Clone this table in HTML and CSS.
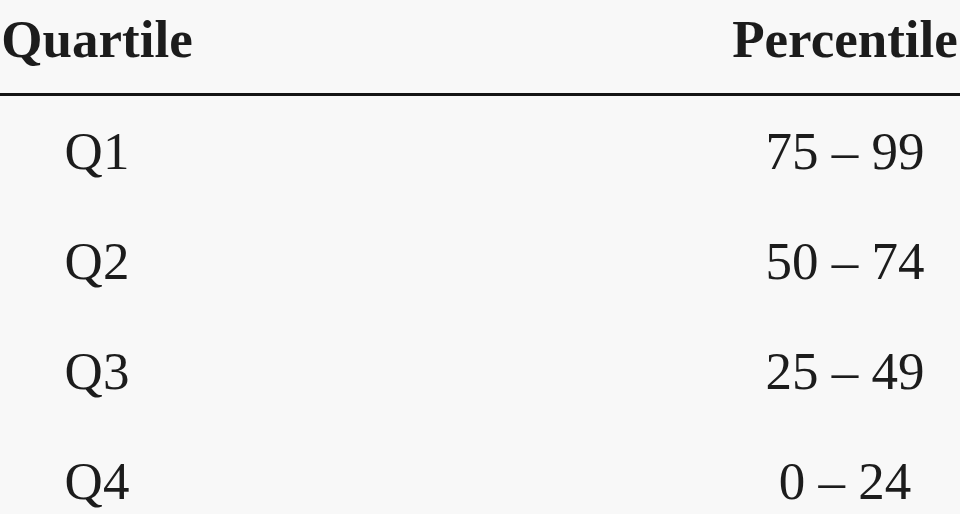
FILE: index.html
```html
<!DOCTYPE html>
<html lang="en">
<head>
<meta charset="utf-8">
<title>Quartile table</title>
<link rel="stylesheet" href="styles.css">
</head>
<body>
<div class="table">
  <div class="row head">
    <div class="cell left">Quartile</div>
    <div class="cell right">Percentile</div>
  </div>
  <div class="row">
    <div class="cell left">Q1</div>
    <div class="cell right">75 – 99</div>
  </div>
  <div class="row">
    <div class="cell left">Q2</div>
    <div class="cell right">50 – 74</div>
  </div>
  <div class="row">
    <div class="cell left">Q3</div>
    <div class="cell right">25 – 49</div>
  </div>
  <div class="row">
    <div class="cell left">Q4</div>
    <div class="cell right">0 – 24</div>
  </div>
</div>
</body>
</html>
```
FILE: styles.css
```css
html, body {
  margin: 0;
  padding: 0;
  background: #f8f8f8;
}
body {
  width: 960px;
  height: 514px;
  overflow: hidden;
  font-family: "Liberation Serif", "Times New Roman", serif;
  color: #1c1c1c;
}
.table {
  display: flex;
  flex-direction: column;
}
.row {
  display: flex;
  justify-content: space-between;
  font-size: 53px;
  line-height: 110px;
  height: 110px;
}
.row.head {
  font-weight: bold;
  line-height: 53px;
  height: 53px;
  padding: 13px 0 27px;
  border-bottom: 3px solid #141414;
}
.cell {
  text-align: center;
  white-space: nowrap;
}
.left {
  width: 194px;
}
.right {
  width: 230px;
}
```
